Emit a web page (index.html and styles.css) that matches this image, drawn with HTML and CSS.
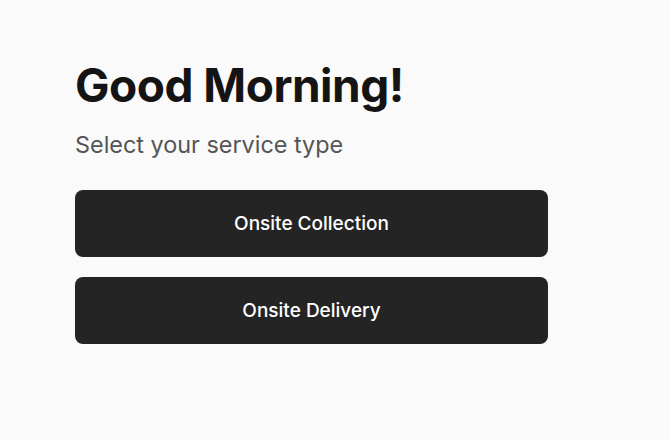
FILE: index.html
```html
<!DOCTYPE html>
<html lang="en">
<head>
<meta charset="utf-8">
<link rel="stylesheet" href="styles.css">
</head>
<body>
<main class="page">
  <h1 class="title">Good Morning!</h1>
  <p class="subtitle">Select your service type</p>
  <div class="options">
    <button class="option">Onsite Collection</button>
    <button class="option">Onsite Delivery</button>
  </div>
</main>
</body>
</html>
```

FILE: styles.css
```css
html, body {
  margin: 0;
  padding: 0;
  background: #fafafa;
  font-family: Inter, "Noto Sans", sans-serif;
}
.page {
  padding: 56px 0 0 75px;
  width: 473px;
}
.title {
  margin: 0;
  font-size: 46px;
  line-height: 58px;
  font-weight: 700;
  color: #141414;
  letter-spacing: -0.5px;
}
.subtitle {
  margin: 16px 0 0;
  font-size: 23.4px;
  line-height: 30px;
  color: #555555;
}
.options {
  margin-top: 30px;
  display: flex;
  flex-direction: column;
  gap: 20px;
}
.option {
  height: 67px;
  border: none;
  border-radius: 8px;
  background: #242424;
  color: #ffffff;
  font-family: Inter, "Noto Sans", sans-serif;
  font-size: 19px;
  font-weight: 500;
  padding: 0;
}
```
